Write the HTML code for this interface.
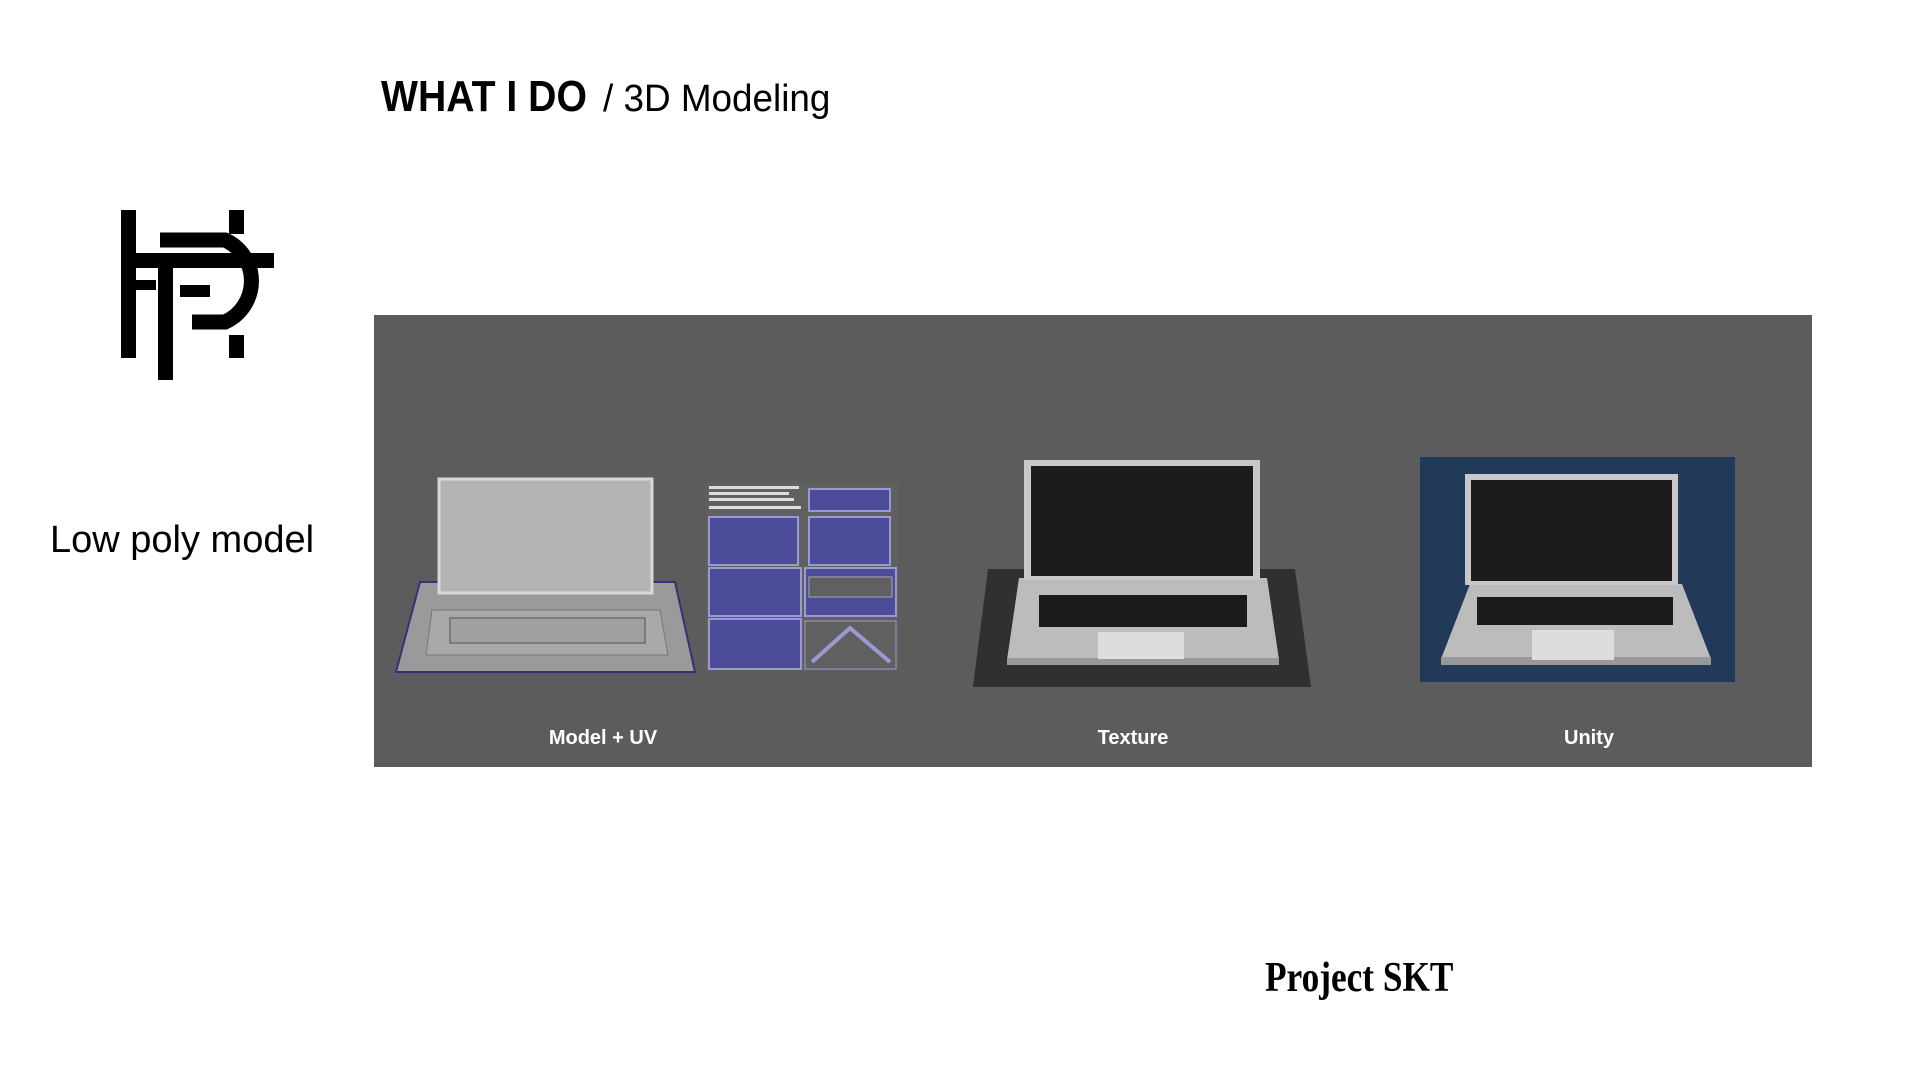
<!DOCTYPE html>
<html><head><meta charset="utf-8"><style>
body{margin:0;width:1920px;height:1080px;background:#fff;position:relative;overflow:hidden;font-family:"Liberation Sans",sans-serif}
.t{position:absolute;white-space:nowrap;color:#000}
</style></head><body>
<div class="t" style="left:381px;top:72px;font-size:44px;font-weight:bold;transform:scaleX(0.89);transform-origin:left">WHAT I DO</div>
<div class="t" style="left:603px;top:78px;font-size:38px;transform:scaleX(0.97);transform-origin:left">/ 3D Modeling</div>
<div class="t" style="left:50px;top:519px;font-size:38px;transform:scaleX(1.0);transform-origin:left">Low poly model</div>
<div class="t" style="left:1265px;top:954px;font-size:42px;font-weight:bold;font-family:'Liberation Serif',serif;transform:scaleX(0.84);transform-origin:left">Project SKT</div>
<svg style="position:absolute;left:0;top:0" width="1920" height="1080">
<g fill="#000">
<rect x="121" y="210" width="15" height="148"/>
<rect x="229" y="210" width="15" height="24"/>
<rect x="229" y="335" width="15" height="23"/>
<rect x="158" y="263" width="15" height="117"/>
<rect x="126" y="253" width="148" height="15"/>
<rect x="126" y="280" width="30" height="10"/>
<rect x="180" y="285" width="30" height="12"/>
</g>
<path d="M160 240 H225 A45 45 0 0 1 225 322 H192" fill="none" stroke="#000" stroke-width="15"/>
<rect x="374" y="315" width="1438" height="452" fill="#5c5c5c"/>
<polygon points="420,582 675,582 695,672 396,672" fill="#9a9a9a" stroke="#33337a" stroke-width="2"/>
<polygon points="432,610 660,610 668,655 426,655" fill="#a8a8a8" stroke="#777"/>
<rect x="439" y="479" width="213" height="114" fill="#b4b4b4" stroke="#d8d8d8" stroke-width="3"/>
<rect x="450" y="618" width="195" height="25" fill="#a0a0a0" stroke="#555" />
<rect x="706" y="482" width="192" height="189" fill="#606060"/>
<g fill="#4c4c9a" stroke="#9a9ad0" stroke-width="2">
<rect x="809" y="489" width="81" height="22"/>
<rect x="709" y="517" width="89" height="48"/>
<rect x="809" y="517" width="81" height="48"/>
<rect x="709" y="568" width="92" height="48"/>
<rect x="709" y="619" width="92" height="50"/>
<rect x="805" y="568" width="91" height="48"/>
</g>
<rect x="809" y="577" width="83" height="20" fill="#606060" stroke="#aaa"/>
<rect x="805" y="621" width="91" height="48" fill="#606060" stroke="#9a9ad0"/>
<path d="M812 662 L850 628 L890 662" stroke="#9a9ad0" stroke-width="4" fill="none"/>
<g fill="#ddd"><rect x="709" y="486" width="90" height="3"/><rect x="709" y="492" width="80" height="3"/><rect x="709" y="498" width="85" height="3"/><rect x="709" y="506" width="92" height="3"/></g>
<polygon points="988,569 1295,569 1311,687 973,687" fill="#303030"/>
<polygon points="1019,578 1267,578 1279,660 1007,660" fill="#bcbcbc"/>
<rect x="1007" y="658" width="272" height="7" fill="#999"/>
<rect x="1024" y="460" width="236" height="120" fill="#c8c8c8"/>
<rect x="1031" y="466" width="222" height="110" fill="#1c1c1c"/>
<rect x="1039" y="595" width="208" height="32" fill="#1a1a1a"/>
<rect x="1098" y="632" width="86" height="27" fill="#ddd"/>
<rect x="1420" y="457" width="315" height="225" fill="#213a5a"/>
<polygon points="1470,584 1682,584 1711,659 1441,659" fill="#bcbcbc"/>
<rect x="1441" y="657" width="270" height="8" fill="#999"/>
<rect x="1465" y="474" width="213" height="111" fill="#c8c8c8"/>
<rect x="1471" y="480" width="201" height="101" fill="#1c1c1c"/>
<rect x="1477" y="597" width="196" height="28" fill="#1a1a1a"/>
<rect x="1532" y="630" width="82" height="30" fill="#ddd"/>
<g fill="#fff" font-family="Liberation Sans" font-weight="bold" font-size="20" text-anchor="middle">
<text x="603" y="744">Model + UV</text><text x="1133" y="744">Texture</text><text x="1589" y="744">Unity</text>
</g>
</svg>
</body></html>
